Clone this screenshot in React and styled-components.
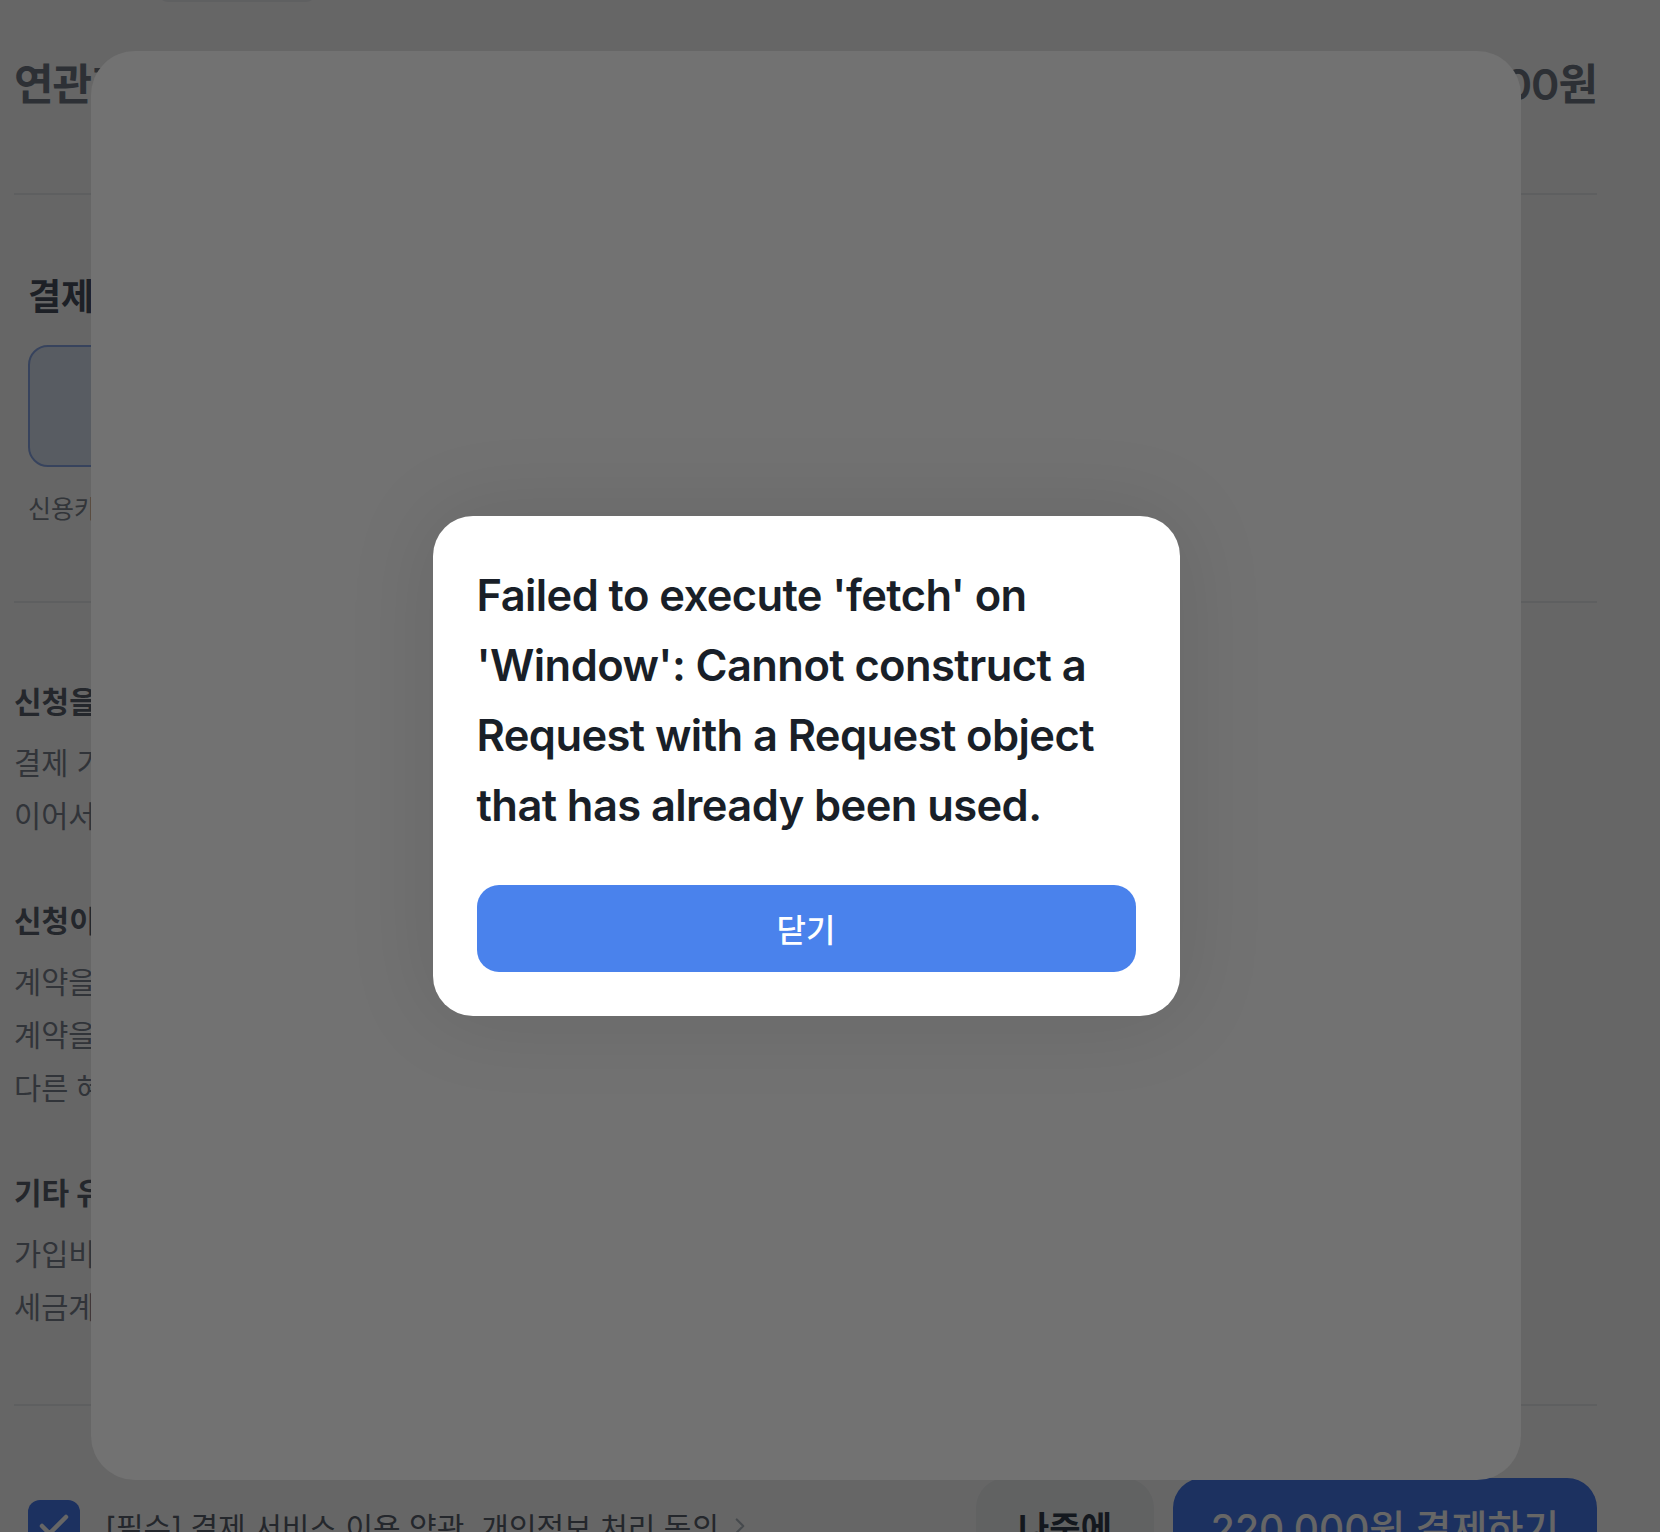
import React from "react";
import styled, { createGlobalStyle } from "styled-components";
import { Check, ChevronRight } from "lucide-react";

const GlobalStyle = createGlobalStyle`
  html, body {
    margin: 0;
    padding: 0;
  }
  body {
    font-family: Inter, "Noto Sans CJK KR", sans-serif;
    background: #ffffff;
    color: #333d4b;
  }
  * {
    box-sizing: border-box;
  }
`;

const notices = [
  {
    title: "신청을 취소하고 싶어요",
    lines: ["결제 기간 중에는 언제든지 취소할 수 있어요.", "이어서 결제가 진행되면 환불이 어려워요."],
  },
  {
    title: "신청이 완료되면",
    lines: [
      "계약을 시작하는 날부터 서비스를 이용할 수 있어요.",
      "계약을 해지하면 남은 기간만큼 돌려드려요.",
      "다른 혜택과 함께 사용할 수 없어요.",
    ],
  },
  {
    title: "기타 유의사항",
    lines: ["가입비는 최초 1회만 결제돼요.", "세금계산서는 결제 후 발행돼요."],
  },
];

const methods = ["신용카드", "계좌이체", "간편결제", "무통장입금"];

const App = () => {
  return (
    <>
      <GlobalStyle />
      <Screen>
        <Page>
          <TopRow>
            <Pill />
          </TopRow>

          <HeaderRow>
            <span>연관계약 금액</span>
            <span>220,000원</span>
          </HeaderRow>

          <PaymentSection>
            <PaymentTitle>결제 수단</PaymentTitle>
            <MethodRow>
              {methods.map((m, i) => (
                <MethodOption key={m}>
                  <MethodCard selected={i === 0} />
                  <MethodLabel>{m}</MethodLabel>
                </MethodOption>
              ))}
            </MethodRow>
          </PaymentSection>

          <NoticeSection>
            {notices.map((n) => (
              <NoticeGroup key={n.title}>
                <NoticeTitle>{n.title}</NoticeTitle>
                {n.lines.map((l) => (
                  <NoticeLine key={l}>{l}</NoticeLine>
                ))}
              </NoticeGroup>
            ))}
          </NoticeSection>

          <BottomBar>
            <Agree>
              <CheckBox>
                <Check size={36} strokeWidth={3} color="#ffffff" />
              </CheckBox>
              <AgreeText>[필수] 결제 서비스 이용 약관, 개인정보 처리 동의</AgreeText>
              <ChevronRight size={26} color="#b0b8c1" />
            </Agree>
            <Actions>
              <LaterButton>나중에</LaterButton>
              <PayButton>220,000원 결제하기</PayButton>
            </Actions>
          </BottomBar>
        </Page>

        <Dim />

        <Sheet>
          <AlertBox>
            <AlertMessage>
              Failed to execute 'fetch' on 'Window': Cannot construct a Request with a Request object that has
              already been used.
            </AlertMessage>
            <CloseButton>닫기</CloseButton>
          </AlertBox>
        </Sheet>
      </Screen>
    </>
  );
};

export default App;

const Screen = styled.div`
  position: relative;
  height: 100vh;
  overflow: hidden;
  background: #ffffff;
`;

const Page = styled.div`
  width: 1583px;
  margin-left: 14px;
  margin-top: -46px;
`;

const TopRow = styled.div`
  height: 48px;
  display: flex;
`;

const Pill = styled.div`
  width: 158px;
  height: 48px;
  margin-left: 144px;
  border-radius: 10px;
  background: #eef0f3;
`;

const HeaderRow = styled.div`
  display: flex;
  justify-content: space-between;
  padding: 53px 0 80px;
  border-bottom: 2px solid #eceef0;
  font-size: 43px;
  line-height: 58px;
  font-weight: 600;
  letter-spacing: -1px;
  color: #707884;
`;

const PaymentSection = styled.div`
  padding: 77px 14px 75px;
  border-bottom: 2px solid #eceef0;
`;

const PaymentTitle = styled.div`
  font-size: 36px;
  line-height: 50px;
  font-weight: 700;
  color: #4a5160;
`;

const MethodRow = styled.div`
  display: flex;
  gap: 16px;
  margin-top: 23px;
`;

const MethodOption = styled.div`
  display: flex;
  flex-direction: column;
  gap: 25px;
  width: 220px;
`;

const MethodCard = styled.div`
  height: 122px;
  border-radius: 20px;
  border: 2px solid ${(p) => (p.selected ? "#8aa8e8" : "#e5e8eb")};
  background: ${(p) => (p.selected ? "#dde6f5" : "#ffffff")};
`;

const MethodLabel = styled.div`
  font-size: 25px;
  line-height: 34px;
  color: #7d8590;
`;

const NoticeSection = styled.div`
  display: flex;
  flex-direction: column;
  gap: 52px;
  padding: 73px 0 70px;
  border-bottom: 2px solid #eceef0;
`;

const NoticeGroup = styled.div`
  display: flex;
  flex-direction: column;
`;

const NoticeTitle = styled.div`
  font-size: 30px;
  line-height: 53px;
  font-weight: 700;
  color: #5a626e;
  margin-bottom: 8px;
`;

const NoticeLine = styled.div`
  font-size: 29.5px;
  line-height: 53px;
  color: #7b838f;
`;

const BottomBar = styled.div`
  display: flex;
  align-items: center;
  justify-content: space-between;
  height: 96px;
  margin-top: 72px;
  padding-left: 14px;
`;

const Agree = styled.div`
  display: flex;
  align-items: center;
`;

const CheckBox = styled.div`
  width: 52px;
  height: 52px;
  border-radius: 12px;
  background: #467af0;
  display: grid;
  place-items: center;
  margin-right: 25px;
`;

const AgreeText = styled.span`
  font-size: 30px;
  color: #5a626e;
  margin-right: 8px;
`;

const Actions = styled.div`
  display: flex;
  gap: 19px;
`;

const LaterButton = styled.button`
  width: 178px;
  height: 96px;
  border: none;
  border-radius: 30px;
  background: #f2f4f6;
  font-family: inherit;
  font-size: 34px;
  font-weight: 700;
  color: #333d4b;
`;

const PayButton = styled.button`
  width: 424px;
  height: 96px;
  border: none;
  border-radius: 30px;
  background: #467af0;
  font-family: inherit;
  font-size: 39px;
  font-weight: 500;
  color: #ffffff;
`;

const Dim = styled.div`
  position: absolute;
  inset: 0;
  background: rgba(0, 0, 0, 0.6);
`;

const Sheet = styled.div`
  position: absolute;
  left: 91px;
  top: 51px;
  width: 1430px;
  height: 1429px;
  border-radius: 44px;
  background: #727272;
  display: flex;
  align-items: center;
  justify-content: center;
`;

const AlertBox = styled.div`
  width: 747px;
  padding: 44px;
  border-radius: 40px;
  background: #ffffff;
  box-shadow: 0 0 90px rgba(0, 0, 0, 0.1);
`;

const AlertMessage = styled.p`
  margin: 0;
  font-family: Inter, "Noto Sans CJK KR", sans-serif;
  font-size: 43.5px;
  line-height: 70px;
  font-weight: 600;
  letter-spacing: -0.6px;
  color: #191f28;
`;

const CloseButton = styled.button`
  display: block;
  width: 100%;
  height: 87px;
  margin-top: 45px;
  border: none;
  border-radius: 22px;
  background: #4a82ec;
  font-family: "Noto Sans CJK KR", sans-serif;
  font-size: 32px;
  font-weight: 500;
  color: #ffffff;
`;
